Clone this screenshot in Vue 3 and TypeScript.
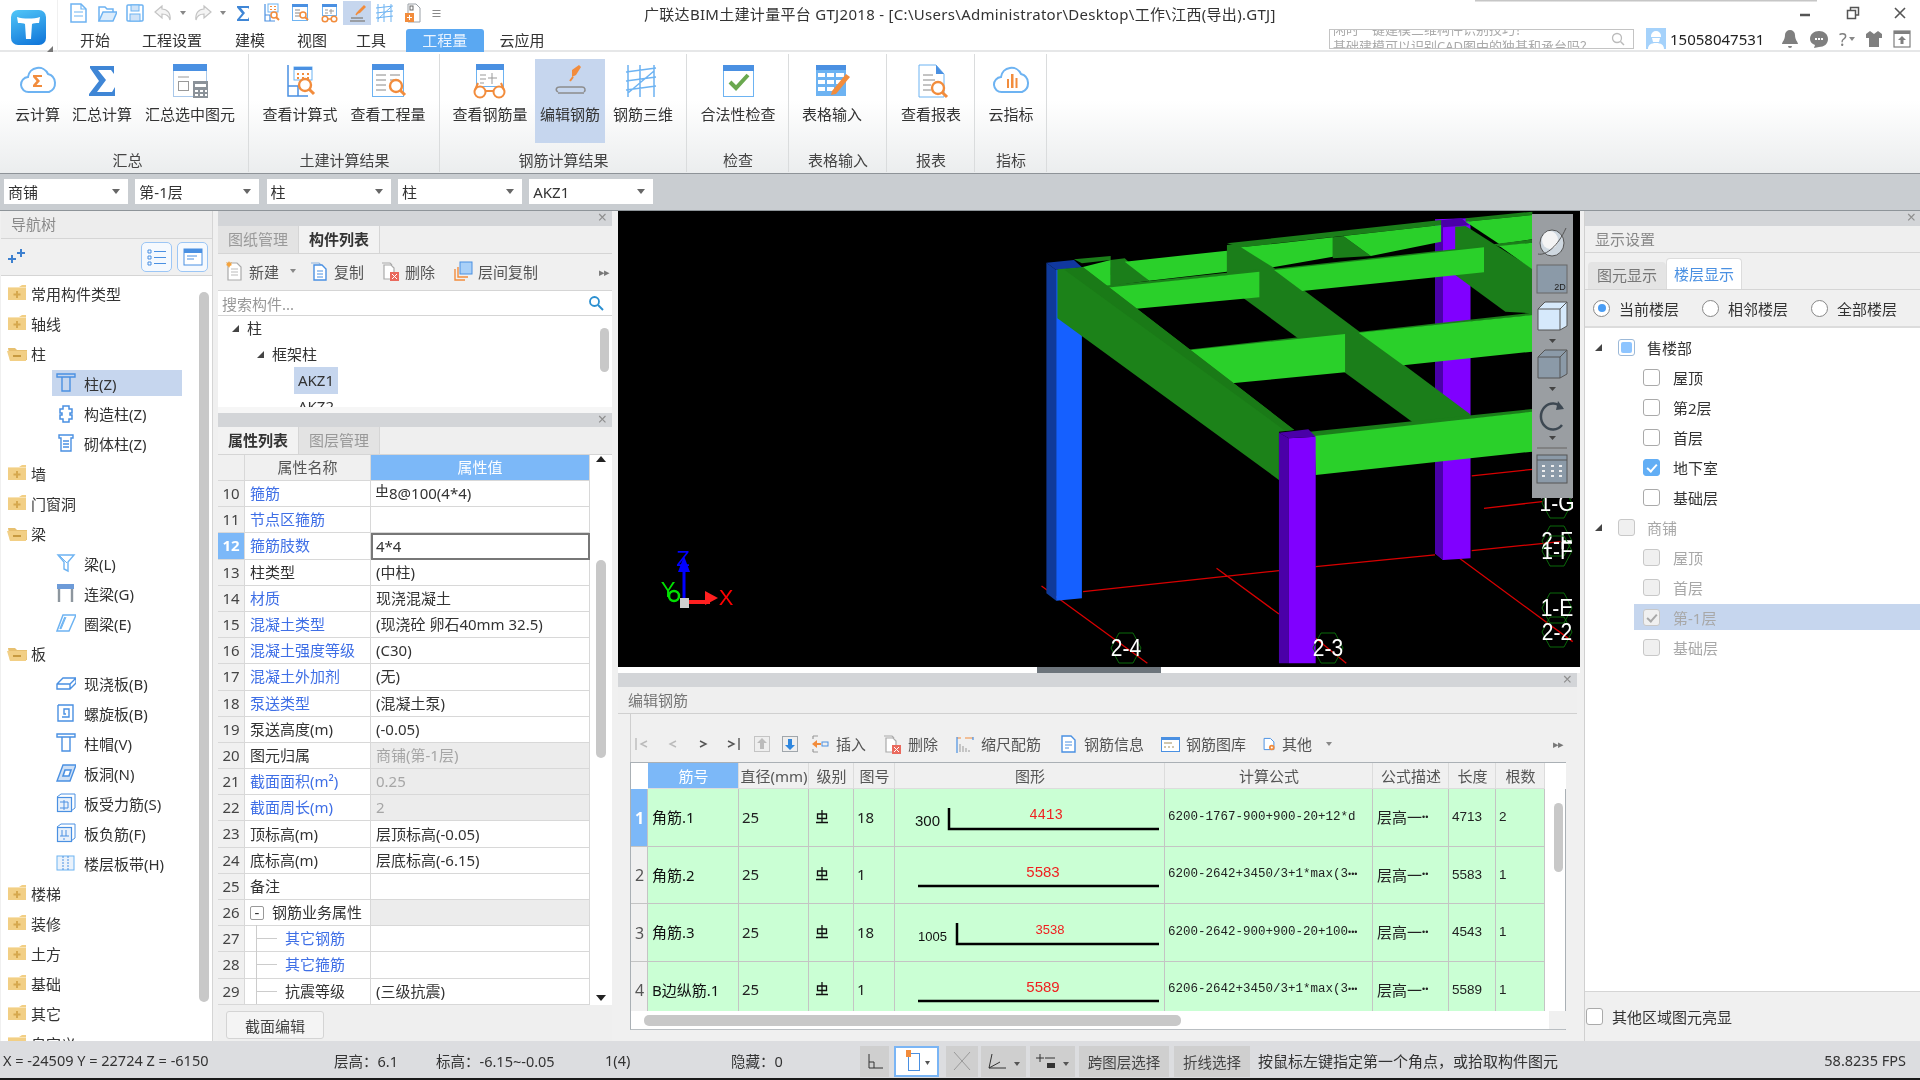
<script setup lang="ts">
const S = (c: string, w = 1.5) => `fill="none" stroke="${c}" stroke-width="${w}"`;
const blue = '#4a90e2', lb = '#6db3f2', org = '#f28c3c';
const mag = (x: number, y: number, r = 6) => `<circle cx="${x}" cy="${y}" r="${r}" fill="#fff" ${S(org, 2.4)}/><path d="M${x + r * 0.7} ${y + r * 0.7}l${r * 0.8} ${r * 0.8}" ${S(org, 3)}/>`;
const icons: Record<string, string> = {
  cloudSum: `<path d="M11 29a7.5 7.5 0 0 1-1-15 10.5 10.5 0 0 1 20-3 9.5 9.5 0 0 1 1 18z" ${S(lb, 2)}/><path d="M15 12h9v2h-5.5l3.5 4-3.500 4H24v2h-9v-2l3.500-4-3.500-4z" fill="${org}"/>`,
  sigma: `<path d="M8 3H32V11L29 7H16L24 17L15 29H30L33 24V33H7V31L17 18L8 5Z" fill="#3f86d6"/>`,
  sumSel: `<rect x="3.500" y="1.500" width="33" height="32" fill="#fff" stroke="#a9c8ea"/><rect x="3" y="1" width="34" height="7" fill="${blue}"/><path d="M8 14H19" stroke="#999"/><rect x="8.500" y="18.500" width="10" height="9" fill="none" stroke="#999"/><rect x="23" y="18" width="15" height="17" fill="#8b9299"/><path d="M25 21h11v3H25zM25 27h3v2h-3zM30 27h3v2h-3zM35 27h2v2h-2zM25 31h3v2h-3zM30 31h3v2h-3zM35 31h2v2h-2z" fill="#fff"/>`,
  viewCalc: `<path d="M8 2V33H28M8 23H18V33" ${S(blue, 1.5)}/><rect x="14" y="4" width="18" height="13" fill="#fff" stroke="${lb}"/><rect x="14" y="4" width="18" height="3" fill="${blue}"/><path d="M17 10h2v2h-2zM22 10h2v2h-2zM27 10h2v2h-2zM17 14h2v2h-2zM22 14h2v2h-2zM27 14h2v2h-2z" fill="${org}"/>${mag(25, 22)}`,
  viewQty: `<rect x="4.500" y="2.500" width="31" height="31" fill="#fff" stroke="${lb}"/><rect x="4" y="1" width="32" height="6" fill="${blue}"/><path d="M8 12H18M22 12H32M8 17H18M22 17H26M8 22H18M8 27H18" stroke="#888"/>${mag(28, 23)}`,
  viewSteel: `<rect x="6.500" y="1.500" width="27" height="22" fill="#fff" stroke="${lb}"/><rect x="6" y="1" width="28" height="6" fill="${blue}"/><path d="M10 12h6M10 16h6M10 20h4M22 10v11M18 15h9" stroke="#999"/><circle cx="10" cy="29" r="5.500" fill="#fff" ${S(org, 2)}/><circle cx="29" cy="29" r="5.500" fill="#fff" ${S(org, 2)}/><path d="M15 28h9M5 27l3-7M34 27l-3-7" ${S(org, 2)}/>`,
  editSteel: `<path d="M22 7l7-5 2 2-5 8-4 2z" fill="${org}"/><path d="M20 18l3-4" ${S(org, 2)}/><path d="M10 24h22M8 29c-3-2-2-5 2-5M32 24c3 0 4 3 2 5M8 30h26" ${S('#8c8c8c', 1.500)}/>`,
  steel3d: `<path d="M5 2V34M17 2V34M31 2V34M3 9L33 5M3 18L33 14M3 27L33 23M5 30L31 8" ${S(lb, 1.5)}/>`,
  check: `<rect x="5.500" y="2.500" width="30" height="31" fill="#fff" stroke="${lb}"/><rect x="5" y="2" width="31" height="6" fill="${blue}"/><path d="M12 19l6 6 12-13" ${S('#6aa84f', 4)}/>`,
  tableInput: `<rect x="4" y="2" width="30" height="31" fill="${lb}"/><rect x="4" y="2" width="30" height="5" fill="${blue}"/><path d="M6 10h7v4H6zM15 10h7v4h-7zM24 10h8v4h-8zM6 17h7v4H6zM15 17h7v4h-7zM24 17h8v4h-8zM6 24h7v4H6zM15 24h7v4h-7z" fill="#fff"/><path d="M20 28l14-17 4 3-14 17-5 1z" fill="${org}"/>`,
  report: `<path d="M8 2H25L33 11V34H8Z" fill="#fff" stroke="${lb}"/><path d="M25 2V11H33Z" fill="${blue}"/><path d="M12 12H22M12 17H24M12 22H20M12 27H20" stroke="#888"/>${mag(27, 25)}`,
  cloudIdx: `<path d="M11 29a7.500 7.500 0 0 1-1-15 10.500 10.500 0 0 1 20-3 9.500 9.500 0 0 1 1 18z" ${S(lb, 2)}/><path d="M16 16h2v9h-2zM20 11h2.500v14H20zM24.500 15h2v10h-2z" fill="${org}"/>`,

  qFile: `<path d="M3 1H13L18 6V19H3Z" fill="#fff" ${S(lb)}/><path d="M6 9H15M6 13H15M13 1V6H18" ${S(lb, 1.2)}/>`,
  qOpen: `<path d="M2 18V4H8L10 6H16V9" ${S(lb)}/><path d="M2 18L6 9H20L16 18Z" fill="#dcecfb" ${S(lb)}/>`,
  qSave: `<rect x="2" y="2" width="16" height="16" rx="1" fill="#fff" ${S(lb)}/><rect x="6" y="2" width="8" height="6" fill="#cfe3f8" stroke="${lb}"/><rect x="5" y="11" width="10" height="7" fill="#cfe3f8" stroke="${lb}"/>`,
  qUndo: `<path d="M9 3L2 9L9 15V11C13 11 16 13 17 17C18 10 14 6 9 6Z" fill="#f4f4f4" ${S('#c4c4c4', 1.2)}/>`,
  qRedo: `<path d="M11 3L18 9L11 15V11C7 11 4 13 3 17C2 10 6 6 11 6Z" fill="#f4f4f4" ${S('#c4c4c4', 1.2)}/>`,
  qSigma: `<path d="M4 3H16V6L15 5H8L12 10L7 16H15L16 14V18H4V16.500L9 10.500L4 4.500Z" fill="#3f86d6"/>`,
  qCalc: `<path d="M4 1V18H14M4 12H9V18" ${S(blue, 1.2)}/><rect x="7" y="1" width="10" height="8" fill="#fff" stroke="${lb}"/><path d="M9 3h2v1H9zM13 3h2v1h-2zM9 6h2v1H9zM13 6h2v1h-2z" fill="${org}"/><circle cx="13" cy="12" r="3" fill="#fff" ${S(org)}/><path d="M15 14l3 3" ${S(org, 2)}/>`,
  qQty: `<rect x="2.500" y="1.500" width="15" height="16" fill="#fff" stroke="${lb}"/><rect x="2" y="1" width="16" height="3" fill="${blue}"/><path d="M5 7h5M5 10h5M5 13h5" stroke="#888"/><circle cx="13" cy="12" r="3" fill="#fff" ${S(org)}/><path d="M15 14l3 3" ${S(org, 2)}/>`,
  qSteel: `<rect x="3.500" y="1.500" width="14" height="11" fill="#fff" stroke="${lb}"/><rect x="3" y="1" width="15" height="3" fill="${blue}"/><path d="M6 7h3M6 10h3M12 6v5M10 8h5" stroke="#999"/><circle cx="6" cy="16" r="2.800" fill="#fff" ${S(org)}/><circle cx="15" cy="16" r="2.800" fill="#fff" ${S(org)}/><path d="M9 16h3" ${S(org)}/>`,
  qEdit: `<path d="M11 8l6-6 2 2-6 6-3 1z" fill="${org}"/><path d="M9 12l2-3" ${S(org)}/><path d="M4 15H16M3 18H18" ${S('#8c8c8c')}/>`,
  q3d: `<path d="M3 1V19M9 1V19M16 1V19M1 5L18 3M1 10L18 8M1 15L18 13M3 16L16 4" ${S(lb, 1)}/>`,
  qPage: `<path d="M5 1H13L17 5V19H5Z" fill="#fff" ${S('#9aa0a6', 1)}/><rect x="2" y="10" width="9" height="9" fill="${org}"/><path d="M6.500 12v5M4 14.500h5" stroke="#fff"/><rect x="7" y="3" width="3" height="4" fill="none" stroke="#666"/>`,

  fClosed: `<path d="M1 4H12L15 2H19V17H1Z" fill="#f2cf85"/><path d="M1 4H19V5H1Z" fill="#f8e3b5"/><path d="M9 8h2v2.500h2.500v2H11V15H9v-2.500H6.500v-2H9z" fill="#d6a84e"/>`,
  fOpen: `<path d="M1 5H8L10 7H20V17H3Z" fill="#e7c070"/><path d="M0 8H20L19 18H3Z" fill="#f2cf85"/><path d="M6 12h8v2H6z" fill="#c89a40"/>`,
  col: `<path d="M1 1H19V4H1ZM6 4V18H14V4" ${S(blue, 1.4)}/>`,
  gz: `<path d="M7 3H13V6H16V10H14V12H16V16H13V19H7V16H4V12H6V10H4V6H7Z" ${S(blue, 1.5)}/>`,
  qt: `<path d="M3 2H17V5H15V18H5V5H3ZM7 8H13M7 11H13M7 14H13" ${S(blue, 1.4)}/>`,
  beam: `<path d="M2 2H18L12 9V18L8 16V9Z" ${S(lb, 1.4)}/><path d="M4 3L11 10" ${S(lb, 1)}/>`,
  lian: `<rect x="1" y="1" width="17" height="5" fill="#6d9bd8"/><path d="M3 6V19M16 6V19" ${S('#8d969e', 2.4)}/>`,
  ring: `<path d="M7 2H20L13 18H1Z M9 4L4 16" ${S(lb, 1.5)}/><path d="M10 4L5 16" ${S(lb, 1)}/>`,
  slab: `<path d="M1 11L7 5H20V10L14 16H1ZM1 11H14L20 5M14 11V16" ${S(blue, 1.4)}/>`,
  spiral: `<path d="M2 2H17V18H2V2M6 14H13V6H8V11H10" ${S(blue, 1.4)}/>`,
  hole: `<path d="M7 2H20L14 18H1Z" fill="#cfe0f5" ${S(blue, 1.4)}/><path d="M9 7H15L13 13H7Z" fill="#fff" ${S(blue, 1.6)}/>`,
  sRebar: `<rect x="1.500" y="4.500" width="14" height="14" fill="#e8f1fb" ${S(blue, 1.2)}/><path d="M1 4L5 1H19V15L15 18M4 9H12V15H4M8 7V17" ${S(blue, 1)}/>`,
  fRebar: `<rect x="1.500" y="4.500" width="14" height="14" fill="#e8f1fb" ${S(blue, 1.2)}/><path d="M1 4L5 1H19V15L15 18M6 7V13M10 7V13M4 13H13M8 15V17" ${S(blue, 1)}/>`,
  band: `<rect x="1" y="3" width="17" height="14" fill="#eaf2fb" stroke="${lb}"/><path d="M7 3V17M12 3V17" ${S(blue, 1)} stroke-dasharray="2 1"/>`,

  tNew: `<path d="M4 2H13L17 6V19H4Z" fill="#fff" ${S('#aaa', 1.2)}/><path d="M2 1l2 1 1-2 1 2 2-1-1 2 1 1-2 1-1 2-1-2-2-1 1-1z" fill="#f5a33c"/><path d="M7 8h7M7 11h7M7 14h7" stroke="#bbb"/>`,
  tCopy: `<path d="M2 2H10L13 5" ${S('#8fb3dd', 1.2)}/><path d="M5 4H13L17 8V19H5Z" fill="#fff" ${S(blue, 1.4)}/><path d="M8 10h6M8 13h6M8 16h6" ${S(blue, 1)}/>`,
  tDel: `<path d="M2 2H10L12 4" ${S('#aaa', 1.200)}/><path d="M4 4H11L14 7V18H4Z" fill="#fff" ${S('#aaa', 1.200)}/><rect x="10" y="11" width="9" height="9" fill="#ea6a5e"/><path d="M12 13l5 5M17 13l-5 5" stroke="#fff"/>`,
  tLayer: `<path d="M2 8V19H12M5 6V16H15" ${S(org, 1.400)}/><rect x="7" y="1" width="12" height="12" fill="#a9d0f8" stroke="${blue}"/>`,

  eFirst: `<path d="M3 4V16" stroke="#bbb" stroke-width="1.400"/><path d="M14 7L8 10L14 13" ${S('#bbb', 1.400)}/>`,
  ePrev: `<path d="M13 7L7 10L13 13" ${S('#bbb', 1.400)}/>`,
  eNext: `<path d="M7 7L13 10L7 13" ${S('#555', 1.400)}/>`,
  eLast: `<path d="M6 7L12 10L6 13" ${S('#555', 1.400)}/><path d="M17 4V16" stroke="#555" stroke-width="1.400"/>`,
  eUp: `<rect x="2.500" y="2.500" width="15" height="15" fill="#eee" stroke="#c4c4c4"/><path d="M10 4L15 9H12V15H8V9H5Z" fill="#bbb"/>`,
  eDown: `<rect x="2.500" y="2.500" width="15" height="15" fill="#eee" stroke="#a0a6ab"/><path d="M10 16L15 11H12V5H8V11H5Z" fill="#2e86de"/>`,
  eIns: `<path d="M3 2H8M3 18H8M3 2V5M3 15V18" ${S('#999', 1.200)}/><path d="M2 10L7 6V14Z" fill="${org}"/><path d="M6 10H11" ${S(org, 2)}/><rect x="12" y="8" width="6" height="4" fill="none" stroke="${blue}"/>`,
  eScale: `<path d="M2 4H6M10 4H18" ${S(org, 1.200)}/><path d="M2 3V19M18 3V6" ${S(blue, 1.200)}/><path d="M5 10V18M8 12V18M11 14V18M14 16V18" stroke="#999"/>`,
  eInfo: `<path d="M4 2H13L17 6V18H4Z" fill="#fff" ${S(blue, 1.400)}/><path d="M7 8h7M7 11h7M7 14h4" ${S(blue, 1)}/>`,
  eLib: `<rect x="1.500" y="3.500" width="18" height="14" fill="#fff" stroke="${blue}"/><rect x="1" y="3" width="19" height="3" fill="${blue}"/><path d="M4 9h8M4 13h2M8 13h2M12 13h2" stroke="#a58f5a"/>`,
  eOther: `<path d="M3 2H12L17 7V18H3Z" fill="#fff" ${S(blue, 1.400)}/><circle cx="14" cy="15" r="4" fill="${org}"/><circle cx="14" cy="15" r="1.500" fill="#fff"/>`,
};

const qat = [
  { i: 'qFile', w: 29 }, { i: 'qOpen', w: 29 }, { i: 'qSave', w: 28 }, { i: 'qUndo', w: 28 }, { a: 1, w: 12 }, { i: 'qRedo', w: 28 }, { a: 1, w: 12 },
  { i: 'qSigma', w: 27 }, { i: 'qCalc', w: 29 }, { i: 'qQty', w: 29 }, { i: 'qSteel', w: 29 }, { i: 'qEdit', w: 28, s: 1 }, { i: 'q3d', w: 28 }, { i: 'qPage', w: 28 },
];
const tabs = [
  { t: '开始', w: 74 }, { t: '工程设置', w: 80 }, { t: '建模', w: 76 }, { t: '视图', w: 48 }, { t: '工具', w: 70 }, { t: '工程量', w: 77.5, on: 1 }, { t: '云应用', w: 77 },
];
const ribbon = [
  { w: 249, pad: 7.5, name: '汇总', items: [{ t: '云计算', i: 'cloudSum', w: 60 }, { t: '汇总计算', i: 'sigma', w: 69 }, { t: '汇总选中图元', i: 'sumSel', w: 107 }] },
  { w: 191, pad: 7, name: '土建计算结果', items: [{ t: '查看计算式', i: 'viewCalc', w: 88 }, { t: '查看工程量', i: 'viewQty', w: 88 }] },
  { w: 247, pad: 5, name: '钢筋计算结果', items: [{ t: '查看钢筋量', i: 'viewSteel', w: 90 }, { t: '编辑钢筋', i: 'editSteel', w: 70, on: 1 }, { t: '钢筋三维', i: 'steel3d', w: 76 }] },
  { w: 102, pad: 6, name: '检查', items: [{ t: '合法性检查', i: 'check', w: 90 }] },
  { w: 98, pad: 0, name: '表格输入', items: [{ t: '表格输入', i: 'tableInput', w: 86 }] },
  { w: 88, pad: 4, name: '报表', items: [{ t: '查看报表', i: 'report', w: 80 }] },
  { w: 72, pad: 1, name: '指标', items: [{ t: '云指标', i: 'cloudIdx', w: 70 }] },
];
const combos = ['商铺', '第-1层', '柱', '柱', 'AKZ1'];
const nav = [
  { t: '常用构件类型', k: 'fClosed' }, { t: '轴线', k: 'fClosed' }, { t: '柱', k: 'fOpen' },
  { t: '柱(Z)', i: 'col', on: 1 }, { t: '构造柱(Z)', i: 'gz' }, { t: '砌体柱(Z)', i: 'qt' },
  { t: '墙', k: 'fClosed' }, { t: '门窗洞', k: 'fClosed' }, { t: '梁', k: 'fOpen' },
  { t: '梁(L)', i: 'beam' }, { t: '连梁(G)', i: 'lian' }, { t: '圈梁(E)', i: 'ring' },
  { t: '板', k: 'fOpen' },
  { t: '现浇板(B)', i: 'slab' }, { t: '螺旋板(B)', i: 'spiral' }, { t: '柱帽(V)', i: 'col' }, { t: '板洞(N)', i: 'hole' }, { t: '板受力筋(S)', i: 'sRebar' }, { t: '板负筋(F)', i: 'fRebar' }, { t: '楼层板带(H)', i: 'band' },
  { t: '楼梯', k: 'fClosed' }, { t: '装修', k: 'fClosed' }, { t: '土方', k: 'fClosed' }, { t: '基础', k: 'fClosed' }, { t: '其它', k: 'fClosed' }, { t: '自定义', k: 'fClosed' },
];
const props = [
  { n: 10, a: '箍筋', v: '8@100(4*4)', link: 1, gr: 1 },
  { n: 11, a: '节点区箍筋', v: '', link: 1 },
  { n: 12, a: '箍筋肢数', v: '4*4', link: 1, edit: 1 },
  { n: 13, a: '柱类型', v: '(中柱)' },
  { n: 14, a: '材质', v: '现浇混凝土', link: 1 },
  { n: 15, a: '混凝土类型', v: '(现浇砼 卵石40mm 32.5)', link: 1 },
  { n: 16, a: '混凝土强度等级', v: '(C30)', link: 1 },
  { n: 17, a: '混凝土外加剂', v: '(无)', link: 1 },
  { n: 18, a: '泵送类型', v: '(混凝土泵)', link: 1 },
  { n: 19, a: '泵送高度(m)', v: '(-0.05)' },
  { n: 20, a: '图元归属', v: '商铺(第-1层)', off: 1 },
  { n: 21, a: '截面面积(m²)', v: '0.25', off: 1, link: 1 },
  { n: 22, a: '截面周长(m)', v: '2', off: 1, link: 1 },
  { n: 23, a: '顶标高(m)', v: '层顶标高(-0.05)' },
  { n: 24, a: '底标高(m)', v: '层底标高(-6.15)' },
  { n: 25, a: '备注', v: '' },
  { n: 26, a: '钢筋业务属性', v: '', group: 1, off: 1 },
  { n: 27, a: '其它钢筋', v: '', sub: 1, link: 1 },
  { n: 28, a: '其它箍筋', v: '', sub: 1, link: 1 },
  { n: 29, a: '抗震等级', v: '(三级抗震)', sub: 1 },
];
const editTools = [
  { i: 'eFirst', w: 30 }, { i: 'ePrev', w: 30 }, { i: 'eNext', w: 29 }, { i: 'eLast', w: 30 }, { i: 'eUp', w: 28 }, { i: 'eDown', w: 30 },
  { i: 'eIns', t: '插入', w: 72 }, { i: 'eDel', t: '删除', w: 73 }, { i: 'eScale', t: '缩尺配筋', w: 103 }, { i: 'eInfo', t: '钢筋信息', w: 102 }, { i: 'eLib', t: '钢筋图库', w: 102 }, { i: 'eOther', t: '其他', w: 70, menu: 1 },
];
icons.eDel = icons.tDel;
const rebarHeads = ['', '筋号', '直径(mm)', '级别', '图号', '图形', '计算公式', '公式描述', '长度', '根数', ''];
const rebars = [
  { n: 1, name: '角筋.1', d: 25, fig: 18, f: '6200-1767-900+900-20+12*d', cut: 0, len: 4713, c: 2, left: '300', vx: 54, lx: 54, label: '4413', tx: 151, lf: 'Liberation Mono', ls: 14 },
  { n: 2, name: '角筋.2', d: 25, fig: 1, f: '6200-2642+3450/3+1*max(3', cut: 1, len: 5583, c: 1, left: '', vx: 0, lx: 23, label: '5583', tx: 148, lf: 'Liberation Sans', ls: 15 },
  { n: 3, name: '角筋.3', d: 25, fig: 18, f: '6200-2642-900+900-20+100', cut: 1, len: 4543, c: 1, left: '1005', vx: 62, lx: 62, label: '3538', tx: 155, lf: 'Liberation Sans', ls: 13 },
  { n: 4, name: 'B边纵筋.1', d: 25, fig: 1, f: '6206-2642+3450/3+1*max(3', cut: 1, len: 5589, c: 1, left: '', vx: 0, lx: 23, label: '5589', tx: 148, lf: 'Liberation Sans', ls: 15 },
];
const floors = [
  { t: '售楼部', p: 1, st: 'part' }, { t: '屋顶' }, { t: '第2层' }, { t: '首层' }, { t: '地下室', st: 'on' }, { t: '基础层' },
  { t: '商铺', p: 1, off: 1 }, { t: '屋顶', off: 1 }, { t: '首层', off: 1 }, { t: '第-1层', off: 1, st: 'grey', sel: 1 }, { t: '基础层', off: 1 },
];
const radios = [{ t: '当前楼层', on: 1 }, { t: '相邻楼层' }, { t: '全部楼层' }];
const labels3d = [
  { t: '1-G', x: 939, y: 292 }, { t: '2-F', x: 939, y: 330 }, { t: '1-F', x: 939, y: 340 }, { t: '1-E', x: 939, y: 397 }, { t: '2-2', x: 939, y: 421 }, { t: '2-4', x: 508, y: 437 }, { t: '2-3', x: 710, y: 437 },
];
const stats = [
  { t: 'X = -24509 Y = 22724 Z = -6150', w: 331 }, { t: '层高：6.1', w: 102 }, { t: '标高：-6.15~-0.05', w: 169 }, { t: '1(4)', w: 126 }, { t: '隐藏：0', w: 129 },
];
</script>

<template>
  <div class="app">
    <header class="top">
      <div class="logo-col">
        <div class="logo"><svg width="35" height="35" viewBox="0 0 35 35"><path d="M6 7C12 9 23 9 29 7L28 13C25 13 22 13 21 14L20 29H15L14 14C13 13 10 13 7 13Z" fill="#fff"/></svg></div>
        <i class="logo-mark"></i>
      </div>
      <div class="top-main">
        <div class="title-row">
          <div class="qat">
            <span v-for="(q, k) in qat" :key="k" class="qbtn" :class="{ on: q.s }" :style="{ width: q.w + 'px' }">
              <svg v-if="q.i" width="20" height="20" viewBox="0 0 20 20" v-html="icons[q.i]"></svg>
              <i v-else class="tri small"></i>
            </span>
            <span class="qmore">≡</span>
          </div>
          <div class="win-title">广联达BIM土建计量平台 GTJ2018 - [C:\Users\Administrator\Desktop\工作\江西(导出).GTJ]</div>
          <div class="win-ctl">
            <svg width="14" height="14" viewBox="0 0 14 14"><path d="M1 9H11" stroke="#555" stroke-width="2.500"/></svg>
            <svg width="14" height="14" viewBox="0 0 14 14"><path d="M1.500 4.500H9.500V12.500H1.500ZM4.500 4V1.500H12.500V9H10" fill="none" stroke="#555" stroke-width="1.500"/></svg>
            <svg width="14" height="14" viewBox="0 0 14 14"><path d="M2 2L12 12M12 2L2 12" stroke="#555" stroke-width="1.600"/></svg>
          </div>
        </div>
        <div class="tab-row">
          <span v-for="t in tabs" :key="t.t" class="rtab" :class="{ on: t.on }" :style="{ width: t.w + 'px' }">{{ t.t }}</span>
          <div class="search-box">
            <div class="search-txt"><div>闲时一键建模三维构件识别技巧？</div><div>基础建模可以识别CAD图中的独基和承台吗？</div></div>
            <svg class="s-ico" width="14" height="14" viewBox="0 0 14 14"><circle cx="6" cy="6" r="4.500" fill="none" stroke="#bbb" stroke-width="1.300"/><path d="M9.500 9.500L13 13" stroke="#bbb" stroke-width="1.500"/></svg>
          </div>
          <svg class="avatar" width="20" height="21" viewBox="0 0 20 21"><rect width="20" height="21" fill="#a5d2fb"/><path d="M5 8a5 5 0 0 1 10 0v1H5zM6 10h8l-1 4H7zM2 21c0-4 3-6 8-6s8 2 8 6z" fill="#fff"/></svg>
          <span class="phone">15058047531</span>
          <div class="user-icons">
            <svg width="18" height="20" viewBox="0 0 18 20"><path d="M9 1a5 5 0 0 1 5 5c0 5 3 7 3 9H1c0-2 3-4 3-9a5 5 0 0 1 5-5zM7 17h4a2 2 0 0 1-4 0z" fill="#7f7f7f"/></svg>
            <svg width="20" height="20" viewBox="0 0 20 20"><path d="M10 2c5 0 9 3 9 8s-4 8-9 8l-5 1 1-3c-3-1-5-3-5-6 0-5 4-8 9-8z" fill="#7f7f7f"/><path d="M6 9h2v2H6zM9 9h2v2H9zM12 9h2v2h-2z" fill="#fff"/></svg>
            <span class="help">?<i class="tri small"></i></span>
            <svg width="18" height="20" viewBox="0 0 18 20"><path d="M5 2L1 5V9H4V18H14V9H17V5L13 2L9 5Z" fill="#7f7f7f"/></svg>
            <svg width="18" height="18" viewBox="0 0 18 18"><rect x="1" y="1" width="16" height="16" fill="none" stroke="#7f7f7f" stroke-width="1.200"/><rect x="1" y="1" width="16" height="3" fill="#7f7f7f"/><path d="M9 6L13 10H10.500V14H7.500V10H5Z" fill="#7f7f7f"/></svg>
          </div>
        </div>
      </div>
      <div class="top-shadow"></div>
    </header>

    <section class="ribbon">
      <div v-for="g in ribbon" :key="g.name" class="rgroup" :style="{ width: g.w + 'px' }">
        <div class="ritems" :style="{ paddingLeft: g.pad + 'px' }">
          <div v-for="it in g.items" :key="it.t" class="ritem" :class="{ on: it.on }" :style="{ width: it.w + 'px' }">
            <svg width="40" height="36" viewBox="0 0 40 36" v-html="icons[it.i]"></svg>
            <span>{{ it.t }}</span>
          </div>
        </div>
        <div class="rname">{{ g.name }}</div>
      </div>
    </section>

    <section class="combos">
      <div v-for="(c, k) in combos" :key="k" class="combo"><span>{{ c }}</span><i class="tri"></i></div>
    </section>

    <main class="main">
      <aside class="nav">
        <div class="nav-title">导航树</div>
        <div class="nav-tools">
          <svg class="plus" width="20" height="16" viewBox="0 0 20 16"><path d="M3 8h2v3h3v2H5v3H3v-3H0v-2h3zM12 2h2v3h3v2h-3v3h-2V7H9V5h3z" fill="#3d80cf"/></svg>
          <span class="tool-btn"><svg width="20" height="18" viewBox="0 0 20 18"><path d="M1 2h3v3H1zM1 8h3v3H1zM1 14h3v3H1zM7 3.500H19M7 9.500H19M7 15.500H19" fill="none" stroke="#4a90e2"/></svg></span>
          <span class="tool-btn"><svg width="20" height="18" viewBox="0 0 20 18"><rect x="1" y="1" width="18" height="16" fill="#fff" stroke="#4a90e2"/><rect x="1" y="1" width="18" height="4" fill="#4a90e2"/><path d="M4 8h10M4 11h7" stroke="#4a90e2"/></svg></span>
        </div>
        <div class="nav-list">
          <div v-for="(r, k) in nav" :key="k" class="nav-row" :class="{ child: r.i, on: r.on }">
            <svg width="20" height="20" viewBox="0 0 20 20" v-html="icons[(r.k || r.i) as string]"></svg>
            <span>{{ r.t }}</span>
          </div>
          <i class="thumb nav-thumb"></i>
        </div>
      </aside>

      <div class="mid">
        <div class="strip"><span class="x">×</span></div>
        <div class="ptabs"><span class="ptab off">图纸管理</span><span class="ptab cur">构件列表</span></div>
        <div class="mtool">
          <span class="mt m1"><svg width="20" height="20" viewBox="0 0 20 20" v-html="icons.tNew"></svg>新建<i class="tri small"></i></span>
          <span class="mt m2"><svg width="20" height="20" viewBox="0 0 20 20" v-html="icons.tCopy"></svg>复制</span>
          <span class="mt m3"><svg width="20" height="20" viewBox="0 0 20 20" v-html="icons.tDel"></svg>删除</span>
          <span class="mt m4"><svg width="20" height="20" viewBox="0 0 20 20" v-html="icons.tLayer"></svg>层间复制</span>
          <span class="more">▸▸</span>
        </div>
        <div class="msearch"><span>搜索构件...</span><svg width="16" height="16" viewBox="0 0 16 16"><circle cx="6.500" cy="6.500" r="4.500" fill="none" stroke="#2b8fd0" stroke-width="1.800"/><path d="M10 10L15 15" stroke="#2b8fd0" stroke-width="2"/></svg></div>
        <div class="mtree">
          <div class="tr l1"><i class="corner"></i>柱</div>
          <div class="tr l2"><i class="corner"></i>框架柱</div>
          <div class="tr l3"><b class="sel">AKZ1</b></div>
          <div class="tr l3"><b>AKZ2</b></div>
          <i class="thumb tree-thumb"></i>
        </div>
        <div class="msplit"></div>
        <div class="strip thin"><span class="x">×</span></div>
        <div class="ptabs"><span class="ptab cur">属性列表</span><span class="ptab off">图层管理</span></div>
        <div class="ptable">
          <div class="phead"><span class="pc0"></span><span class="pc1">属性名称</span><span class="pc2">属性值</span></div>
          <div v-for="p in props" :key="p.n" class="prow">
            <span class="pc0" :class="{ cur: p.edit }">{{ p.n }}</span>
            <span class="pc1" :class="{ link: p.link, sub: p.sub }">
              <template v-if="p.group"><i class="minus">-</i></template>
              <i v-if="p.sub" class="guide"></i>
              {{ p.a }}
            </span>
            <span class="pc2" :class="{ off: p.off, editing: p.edit }">
              <svg v-if="p.gr" class="gr gr-top" width="12" height="14" viewBox="0 0 12 14"><path d="M6 0V13M0 12.500H12M1.500 4H10.500V8.500H1.500Z" fill="none" stroke="#333" stroke-width="1.200"/></svg>{{ p.v }}
            </span>
          </div>
          <div class="pscroll">
            <i class="arrow up"></i><i class="thumb prop-thumb"></i><i class="arrow down"></i>
          </div>
        </div>
        <div class="pfoot"><button class="sec-btn">截面编辑</button></div>
      </div>

      <div class="center">
        <div class="canvas">
          <svg class="scene" width="962" height="456" viewBox="0 0 962 456">
            <g transform="scale(0.612 0.3333) translate(0 -3)">
              <g stroke="#d80000" fill="none">
                <path vector-effect="non-scaling-stroke" stroke-width="1.300" d="M760 1145L1080 1082M1140 1070L1335 1035M1395 1022L1540 995M1395 798L1494 778M1415 895L1510 875M692 1128L865 1360M978 1075L1080 1212M1140 1285L1190 1360M1375 1045L1560 1295"/>
              </g>
              <polygon points="1335,28 1390,25 1393,50 1393,1045 1348,1050 1335,1030" fill="#8000ff"/>
              <polygon points="1335,30 1348,50 1348,1050 1335,1030" fill="#4a00a8"/>
              <polygon points="1335,32 1378,25 1392,46 1348,52" fill="#4a00a8"/>
              <polygon points="700,158 716,180 716,1172 700,1150" fill="#0f3a9a"/>
              <polygon points="716,180 758,172 758,1165 716,1172" fill="#1560ff"/>
              <polygon points="700,158 745,150 758,172 716,180" fill="#10389f"/>

              <polygon points="805,150 828,145 868,212 805,228" fill="#1b7e1a"/>
              <polygon points="1168,82 1185,78 1230,138 1168,145" fill="#1b7e1a"/>
              <polygon points="1368,50 1385,48 1494,175 1494,310 1450,305 1368,195" fill="#1b7e1a"/>
              <polygon points="995,105 1018,100 1392,612 1392,622 1298,636 1020,262 995,190" fill="#1b7e1a"/>

              <polygon points="745,148 805,138 805,150 758,160" fill="#1b7e1a"/>
              <polygon points="995,100 1345,30 1345,45 1018,112" fill="#1b7e1a"/>
              <polygon points="1385,25 1494,5 1494,15 1385,35" fill="#1b7e1a"/>
              <polygon points="758,172 805,150 805,228 780,232 758,195" fill="#2ad02a"/>
              <polygon points="828,155 995,122 995,185 868,212" fill="#2ad02a"/>
              <polygon points="1018,112 1168,82 1168,140 1070,172" fill="#2ad02a"/>
              <polygon points="1185,78 1345,45 1345,95 1230,138" fill="#2ad02a"/>
              <polygon points="1385,35 1494,15 1494,88 1440,102" fill="#2ad02a"/>

              <polygon points="780,230 1048,178 1048,186 790,237" fill="#1b7e1a"/>
              <polygon points="1072,176 1415,108 1415,114 1072,182" fill="#1b7e1a"/>
              <polygon points="1430,103 1494,88 1494,98 1440,110" fill="#1b7e1a"/>
              <polygon points="790,235 1048,185 1048,262 838,298" fill="#2ad02a"/>
              <polygon points="1072,180 1415,112 1415,187 1118,243" fill="#2ad02a"/>
              <polygon points="1440,108 1494,98 1494,178" fill="#2ad02a"/>

              <polygon points="912,423 1188,366 1188,375 925,425" fill="#1b7e1a"/>
              <polygon points="1210,366 1494,308 1494,316 1210,370" fill="#1b7e1a"/>
              <polygon points="925,422 1188,372 1188,487 1003,520" fill="#2ad02a"/>
              <polygon points="1210,368 1494,315 1494,425 1283,466" fill="#2ad02a"/>

              <polygon points="718,178 760,172 1105,660 1080,665 1080,810 718,325" fill="#1c8219"/>
              <polygon points="730,180 760,172 1105,660 1090,662" fill="#1a7a17"/>

              <polygon points="1130,665 1494,597 1494,607 1138,680" fill="#1b7e1a"/>
              <polygon points="1138,678 1494,605 1494,725 1140,795" fill="#2ad02a"/>

              <polygon points="1080,668 1096,685 1096,1360 1080,1360" fill="#4a00a8"/>
              <polygon points="1096,685 1140,680 1140,1360 1096,1360" fill="#8000ff"/>
              <polygon points="1080,668 1128,658 1140,680 1096,685" fill="#4a00a8"/>
            </g>
            <g class="axis">
              <path d="M66 391V358" stroke="#0000ff" stroke-width="3"/>
              <path d="M66 345L60 361H72Z" fill="#0000ff"/>
              <path d="M66 391H92" stroke="#ff2020" stroke-width="4"/>
              <path d="M100 387L87 380V394Z" fill="#ff2020"/>
              <circle cx="56" cy="385" r="5" fill="none" stroke="#00e000" stroke-width="2.500"/>
              <rect x="62" y="387" width="9" height="10" fill="#cfcfcf"/>
              <text x="65" y="355" class="ax" fill="#0000ff" text-anchor="middle">Z</text>
              <text x="108" y="394" class="ax" fill="#ff0000" text-anchor="middle">X</text>
              <text x="50" y="386" class="ax" fill="#00e000" text-anchor="middle">Y</text>
            </g>
            <g v-for="l in labels3d" :key="l.t">
              <polygon :points="`${l.x - 7},${l.y - 15} ${l.x + 7},${l.y - 15} ${l.x + 15},${l.y} ${l.x + 7},${l.y + 15} ${l.x - 7},${l.y + 15} ${l.x - 15},${l.y}`" fill="none" stroke="#0a6a0a"/>
              <text :transform="`translate(${l.x} ${l.y + 8}) scale(1.05 1.2)`" class="lbl" text-anchor="middle">{{ l.t }}</text>
            </g>
          </svg>
          <div class="view-bar">
            <svg width="41" height="284" viewBox="0 0 41 284">
              <ellipse cx="20" cy="29" rx="12" ry="13" fill="#cfd8e0" stroke="#555"/><ellipse cx="18" cy="26" rx="8" ry="9" fill="#f4f4f4"/><path d="M6 40c8 2 20-8 28-26" fill="none" stroke="#555"/>
              <rect x="5" y="51" width="30" height="28" fill="#8b9aa8" stroke="#666"/><text x="28" y="76" class="vt">2D</text>
              <path d="M6 95L13 88H35V112L28 116H6ZM6 95H28V116M28 95L35 88" fill="#d6e9fb" stroke="#555"/>
              <path d="M17 125h7l-3.500 4z" fill="#444"/>
              <path d="M6 143L13 136H35V160L28 164H6ZM6 143H28V164M28 143L35 136" fill="#8b9aa8" stroke="#555"/>
              <path d="M17 173h7l-3.500 4z" fill="#444"/>
              <path d="M30 194a12 13 0 1 0 0 17" fill="none" stroke="#3d4852" stroke-width="2.500"/><path d="M26 187l6 8-8 1z" fill="#3d4852"/>
              <path d="M17 222h7l-3.500 4z" fill="#444"/>
              <path d="M5 234H35" stroke="#777" stroke-width="1.500"/>
              <rect x="5" y="241" width="30" height="28" fill="#8b9aa8" stroke="#555"/><path d="M5 246H35" stroke="#555"/><path d="M10 252h3M10 257h3M10 262h3M19 252h3M19 257h3M19 262h3M27 252h3M27 257h3M27 262h3" stroke="#eee" stroke-width="2"/>
            </svg>
          </div>
        </div>
        <div class="csplit"><i></i></div>
        <section class="edit">
          <div class="strip thin"><span class="x">×</span></div>
          <div class="edit-title">编辑钢筋</div>
          <div class="etool">
            <span v-for="e in editTools" :key="e.i" class="et" :style="{ width: e.w + 'px' }">
              <svg width="20" height="20" viewBox="0 0 20 20" v-html="icons[e.i]"></svg><template v-if="e.t">{{ e.t }}</template><i v-if="e.menu" class="tri small"></i>
            </span>
            <span class="more">▸▸</span>
          </div>
          <div class="rtable">
            <div class="rhead">
              <span v-for="(h, k) in rebarHeads" :key="k" :class="{ hi: k === 1, blank: k === 0 || k === 10 }">{{ h }}</span>
            </div>
            <div class="rbody">
              <div v-for="r in rebars" :key="r.n" class="rrow">
                <span class="ridx" :class="{ cur: r.n === 1 }">{{ r.n }}</span>
                <span class="rname-c">{{ r.name }}</span>
                <span>{{ r.d }}</span>
                <span><svg class="gr grade" width="12" height="14" viewBox="0 0 12 14"><path d="M6 0V13M0 12.500H12M1.500 4H10.500V8.500H1.500Z" fill="none" stroke="#111" stroke-width="1.300"/></svg></span>
                <span>{{ r.fig }}</span>
                <span class="fig">
                  <svg width="270" height="57" viewBox="0 0 270 57">
                    <text v-if="r.left" :x="r.left.length > 3 ? 23 : 20" y="37" class="figl" :class="{ n4: r.left.length > 3 }">{{ r.left }}</text>
                    <path :d="r.vx ? `M${r.vx} 19V40H264` : 'M23 39H264'" fill="none" stroke="#000" stroke-width="2.500"/>
                    <text :x="r.tx" y="30" class="figr" text-anchor="middle" :style="{ fontFamily: r.lf, fontSize: r.ls + 'px' }">{{ r.label }}</text>
                  </svg>
                </span>
                <span class="mono">{{ r.f }}<em v-if="r.cut" class="dots">•••</em></span>
                <span class="desc">层高一<em class="dots">••</em></span>
                <span class="num">{{ r.len }}</span>
                <span class="num">{{ r.c }}</span>
                <span class="rblank"></span>
              </div>
              <i class="thumb r-thumb"></i>
            </div>
            <div class="hscroll"><i></i></div>
          </div>
        </section>
      </div>

      <aside class="right">
        <div class="strip"><span class="x">×</span></div>
        <div class="right-title">显示设置</div>
        <div class="rtabs"><span class="rt">图元显示</span><span class="rt cur">楼层显示</span></div>
        <div class="radios">
          <label v-for="r in radios" :key="r.t"><i class="radio" :class="{ on: r.on }"></i>{{ r.t }}</label>
        </div>
        <div class="ftree">
          <div v-for="(f, k) in floors" :key="k" class="frow" :class="{ parent: f.p, off: f.off, sel: f.sel }">
            <i v-if="f.p" class="corner"></i>
            <i class="cb" :class="f.st"></i>
            <span>{{ f.t }}</span>
          </div>
        </div>
        <div class="rfoot"><i class="cb"></i><span>其他区域图元亮显</span></div>
      </aside>
    </main>

    <footer class="status">
      <span v-for="s in stats" :key="s.t" class="stat" :style="{ width: s.w + 'px' }">{{ s.t }}</span>
      <span class="sb sb1"><svg width="20" height="20" viewBox="0 0 20 20"><path d="M4 3V17H18M4 11H9V17" fill="none" stroke="#333"/></svg></span>
      <span class="sb sb2"><svg width="26" height="24" viewBox="0 0 26 24"><rect x="4.500" y="4.500" width="11" height="17" fill="#fff" stroke="#4a90e2"/><rect x="2" y="1" width="5" height="7" fill="#f28c3c"/><path d="M21 12h5l-2.500 4z" fill="#555"/></svg></span>
      <span class="sb sb3"><svg width="20" height="22" viewBox="0 0 20 22"><path d="M2 2L18 20M18 2L2 20" stroke="#9a9a9a"/></svg></span>
      <span class="sb sb4"><svg width="40" height="22" viewBox="0 0 40 22"><path d="M8 4L5 18H22M5 18L16 12" fill="none" stroke="#333"/><path d="M30 12h6l-3 4z" fill="#555"/></svg></span>
      <span class="sb sb5"><svg width="40" height="22" viewBox="0 0 40 22"><path d="M7 4V12M3 8H11M12 8H22" stroke="#333"/><rect x="14" y="13" width="8" height="5" fill="#333"/><path d="M30 12h6l-3 4z" fill="#555"/></svg></span>
      <span class="sb sb6">跨图层选择</span>
      <span class="sb sb7">折线选择</span>
      <span class="hint">按鼠标左键指定第一个角点，或拾取构件图元</span>
      <span class="fps">58.8235 FPS</span>
    </footer>
    <div class="black"></div>
  </div>
</template>

<style>
html, body { margin: 0; background: #f0f0f0; overflow: hidden; }
</style>

<style scoped>
.app {
  width: 1920px; height: 1080px; display: flex; flex-direction: column; overflow: hidden;
  font-family: "Noto Sans", "Noto Sans CJK SC", sans-serif; font-size: 15px; color: #333; background: #f0f0f0;
  filter: blur(0.45px); position: relative;
}
i { font-style: normal; display: block; }
span, label { white-space: nowrap; }
.tri { width: 0; height: 0; border: 4px solid transparent; border-top: 5px solid #666; border-bottom: 0; }
.tri.small { border-width: 3.5px; border-top-width: 4px; border-bottom-width: 0; border-top-color: #888; }

.top { height: 52px; display: flex; background: #fff; flex: none; position: relative; box-shadow: inset 0 -2px 0 #e6e7e8; }
.logo-col { width: 57px; flex: none; position: relative; border-right: 1px solid #f0f0f0; }
.logo { margin: 10px 0 0 11px; width: 35px; height: 35px; border-radius: 7px; background: linear-gradient(160deg, #52c7f8, #0d72d8); }
.logo-mark { position: absolute; left: 47px; top: 46px; border: 3px solid transparent; border-right-color: #777; border-bottom-color: #777; }
.top-shadow { position: absolute; left: 1475px; top: 0; width: 342px; height: 2px; background: linear-gradient(#b8b8b8, #efefef); }
.top-main { flex: 1; display: flex; flex-direction: column; min-width: 0; }
.title-row { height: 26px; display: flex; align-items: center; padding-left: 5px; }
.qat { display: flex; align-items: center; width: 581px; flex: none; }
.qbtn { height: 24px; display: flex; align-items: center; justify-content: center; flex: none; }
.qbtn.on { background: #c6d6ee; }
.qmore { margin-left: 4px; font-size: 11px; color: #666; }
.win-title { font-size: 15px; letter-spacing: 0.3px; color: #333; white-space: nowrap; width: 640px; flex: none; }
.win-ctl { margin-left: auto; display: flex; gap: 33px; padding-right: 13px; }
.tab-row { height: 26px; display: flex; align-items: flex-end; }
.rtab { height: 23px; line-height: 23px; text-align: center; flex: none; color: #333; }
.rtab.on { background: #5aa8f2; color: #e8f3ff; border-radius: 3px 3px 0 0; }
.search-box { margin-left: 768.500px; width: 305px; height: 20px; box-sizing: border-box; border: 1px solid #c4c4c4; align-self: flex-start; margin-top: 3px; overflow: hidden; position: relative; flex: none; }
.search-txt { font-size: 13px; line-height: 17px; color: #aaa; padding-left: 3px; margin-top: -9px; white-space: nowrap; }
.s-ico { position: absolute; right: 8px; top: 2px; }
.avatar { margin: 2px 0 0 12px; align-self: flex-start; flex: none; }
.phone { align-self: flex-start; margin: 2px 0 0 4px; font-size: 15px; line-height: 22px; color: #222; width: 100px; flex: none; }
.user-icons { align-self: flex-start; margin: 3px 0 0 11px; display: flex; align-items: center; gap: 10px; flex: none; }
.help { font-size: 18px; line-height: 20px; color: #7f7f7f; display: flex; align-items: center; gap: 2px; }

.ribbon { height: 122px; flex: none; display: flex; background: linear-gradient(#fff 0%, #fff 40%, #ebedee 100%); border-bottom: 1px solid #8e9398; box-sizing: border-box; }
.rgroup { flex: none; display: flex; flex-direction: column; box-shadow: inset -1px 0 0 #dadcdd; margin-top: 2px; height: 118px; box-sizing: border-box; }
.rgroup:first-child .rname { padding-left: 6px; }
.ritems { display: flex; height: 92px; padding-top: 5px; box-sizing: border-box; }
.ritem { flex: none; height: 84px; display: flex; flex-direction: column; align-items: center; padding-top: 4px; box-sizing: border-box; }
.ritem span { line-height: 20px; margin-top: 5px; font-size: 15px; }
.ritem.on { background: #c6d6ee; }
.rname { text-align: center; line-height: 20px; color: #444; font-size: 15px; margin-top: 4px; }

.combos { height: 36px; flex: none; display: flex; background: #c9cdd1; padding: 5px 0 0 4px; box-sizing: border-box; gap: 7.300px; }
.combo { width: 124px; height: 25px; background: #fff; display: flex; align-items: center; justify-content: space-between; padding: 0 8px 0 4px; box-sizing: border-box; color: #333; }

.main { height: 831px; flex: none; display: flex; background: #f0f0f0; border-top: 1px solid #8e9499; box-sizing: border-box; }

.nav { width: 212px; margin-left: 1px; flex: none; display: flex; flex-direction: column; border-right: 1px solid #d5d5d5; box-sizing: border-box; }
.nav-title { height: 27px; line-height: 27px; color: #8a8a8a; padding-left: 10px; background: #ededed; border-bottom: 1px solid #d5d5d5; }
.nav-tools { height: 36px; display: flex; align-items: center; padding-right: 4px; gap: 5px; border-bottom: 1px solid #d5d5d5; background: #f0f0f0; }
.plus { margin: 0 auto 4px 7px; }
.tool-btn { width: 31px; height: 30px; border: 1px solid #9cc6f5; border-radius: 5px; background: #f5f9fe; display: flex; align-items: center; justify-content: center; box-sizing: border-box; }
.nav-list { flex: 1; background: #fff; padding-top: 2px; overflow: hidden; position: relative; }
.nav-row { height: 30px; display: flex; align-items: center; gap: 4px; padding-left: 6px; color: #333; }
.nav-row.child { margin-left: 51px; padding-left: 4px; width: 130px; box-sizing: border-box; gap: 8px; }
.nav-row.child.on { background: #c6d6ee; height: 26px; margin: 2px 0 2px 51px; }
.thumb { position: absolute; background: #c8c8c8; border-radius: 5px; }
.nav-thumb { left: 198px; top: 16px; width: 10px; height: 710px; }

.mid { width: 394px; margin-left: 5px; flex: none; display: flex; flex-direction: column; }
.strip { height: 15px; background: #d3d5d8; position: relative; flex: none; }
.strip.thin { height: 14px; }
.x { position: absolute; right: 5px; top: -3px; color: #8f8f8f; font-size: 16px; line-height: 18px; }
.ptabs { height: 28px; display: flex; flex: none; background: #efefef; border-bottom: 1px solid #d5d5d5; box-sizing: border-box; }
.ptab { width: 81px; text-align: center; line-height: 27px; font-size: 15px; border-right: 1px solid #d5d5d5; box-sizing: border-box; }
.ptab.off { background: #e3e3e3; color: #999; }
.ptab.cur { font-weight: 700; background: #f2f2f2; color: #333; }
.mtool { height: 37px; display: flex; align-items: center; background: #f0f0f0; border-bottom: 1px solid #d5d5d5; color: #555; flex: none; box-sizing: border-box; position: relative; padding-bottom: 2px; }
.mt { display: flex; align-items: center; gap: 5px; flex: none; }
.m1 { margin-left: 6px; width: 85px; }
.m1 .tri { margin-left: 6px; }
.m2 { width: 71px; }
.m3 { width: 73px; }
.more { color: #777; font-size: 11px; letter-spacing: -1px; margin-left: auto; padding-right: 3px; }
.msearch { height: 24px; background: #fff; display: flex; align-items: center; justify-content: space-between; padding: 0 8px 0 4px; color: #999; border-bottom: 1px solid #d5d5d5; flex: none; box-sizing: content-box; }
.mtree { height: 91px; background: #fff; overflow: hidden; position: relative; flex: none; }
.tr { height: 26px; line-height: 26px; display: flex; align-items: center; color: #333; margin-top: -1px; margin-bottom: 1px; }
.tr b { font-weight: 400; padding: 0 4px; line-height: 27px; }
.tr b.sel { background: #c6d6ee; }
.l1 { padding-left: 14px; gap: 8px; }
.l2 { padding-left: 39px; gap: 8px; }
.l3 { padding-left: 76px; }
.corner { width: 0; height: 0; border-left: 7px solid transparent; border-bottom: 7px solid #444; }
.tree-thumb { left: 382px; top: 12px; width: 9px; height: 44px; }
.msplit { height: 6px; background: #f6f6f6; flex: none; }
.ptable { flex: none; height: 550px; position: relative; background: #fff; }
.phead { display: flex; height: 26px; line-height: 25px; }
.phead .pc0 { background: #f0f0f0; }
.phead .pc1 { background: #f0f0f0; color: #555; justify-content: center; padding: 0; }
.phead .pc2 { background: #7cb8f8; color: #fff; justify-content: center; padding: 0; }
.pc0 { width: 27px; flex: none; box-sizing: border-box; background: #f0f0f0; text-align: center; color: #444; border-right: 1px solid #d8d8d8; border-bottom: 1px solid #d8d8d8; }
.pc1 { width: 126px; flex: none; box-sizing: border-box; padding-left: 5px; border-right: 1px solid #d8d8d8; border-bottom: 1px solid #d8d8d8; color: #333; display: flex; align-items: center; white-space: nowrap; position: relative; }
.pc2 { width: 219px; flex: none; box-sizing: border-box; padding-left: 5px; border-right: 1px solid #d8d8d8; border-bottom: 1px solid #d8d8d8; display: flex; align-items: center; white-space: nowrap; color: #333; }
.prow { display: flex; height: 26.200px; line-height: 25px; }
.pc0.cur { background: #7cb8f8; color: #fff; font-weight: 700; }
.pc1.link { color: #3f6fe6; }
.pc2.off { background: #ececec; color: #a6a6a6; }
.pc2.editing { border: 2px solid #777; padding-left: 3px; }
.pc1.sub { padding-left: 40px; }
.minus { width: 14px; height: 14px; border: 1px solid #999; border-radius: 2px; line-height: 11px; text-align: center; margin-right: 8px; box-sizing: border-box; flex: none; }
.guide { position: absolute; left: 11px; top: -1px; bottom: 0; width: 20px; border-left: 1px solid #ccc; }
.guide::after { content: ""; position: absolute; left: 0; right: 0; top: 13px; border-top: 1px solid #ccc; }
.gr-top { margin-right: 1px; margin-top: -6px; }
.pscroll { position: absolute; left: 373px; top: 0; width: 20px; bottom: 0; }
.arrow { position: absolute; left: 5px; width: 0; height: 0; border: 5px solid transparent; }
.arrow.up { top: 1px; border-bottom: 6px solid #222; border-top: 0; }
.arrow.down { bottom: 4px; border-top: 6px solid #222; border-bottom: 0; }
.prop-thumb { left: 5px; top: 105px; width: 10px; height: 198px; }
.pfoot { flex: 1; background: #efefef; padding: 6px 0 0 8px; }
.sec-btn { width: 98px; height: 28px; border: 1px solid #d4d4d4; border-radius: 3px; background: #f4f4f4; font: inherit; color: #444; display: block; }

.center { width: 962px; margin-left: 6px; flex: none; display: flex; flex-direction: column; }
.canvas { height: 456px; flex: none; background: #000; position: relative; overflow: hidden; }
.scene { display: block; }
.ax { font-family: "Liberation Sans", sans-serif; font-size: 22px; }
.lbl { font-family: "Liberation Sans", sans-serif; font-size: 20px; fill: #fff; }
.view-bar { position: absolute; left: 914px; top: 3px; width: 41px; height: 284px; background: #9a9ea2; }
.view-bar svg { display: block; }
.vt { font-family: "Liberation Sans", sans-serif; font-size: 9px; fill: #222; text-anchor: middle; }
.csplit { height: 6px; background: #fff; flex: none; position: relative; }
.csplit i { position: absolute; left: 419px; top: 0; width: 124px; height: 6px; background: #6d757c; }
.edit { flex: 1; display: flex; flex-direction: column; width: 959px; position: relative; }
.edit-title { height: 27px; line-height: 27px; background: #efefef; color: #777; padding-left: 10px; border-bottom: 1px solid #d0d0d0; box-sizing: border-box; flex: none; }
.etool { height: 48px; display: flex; align-items: center; margin-left: 12px; border-left: 1px solid #cfcfcf; padding: 11px 0 0 2px; box-sizing: border-box; color: #555; flex: none; width: 936px; }
.et { display: flex; align-items: center; justify-content: flex-start; gap: 6px; flex: none; }
.et .tri { margin-left: 8px; }
.rtable { margin-left: 12px; width: 936px; height: 268px; flex: none; border: 1px solid #aab0b5; border-bottom-color: #b9bec2; box-sizing: border-box; background: #fff; position: relative; }
.rhead, .rrow { display: grid; grid-template-columns: 17px 91px 70px 45px 41px 270px 208px 76px 47px 49px 21px; }
.rhead { height: 26px; background: #f0f0f0; }
.rhead span { text-align: center; line-height: 26px; color: #555; box-shadow: inset -1px -1px 0 #dcdcdc; overflow: hidden; }
.rhead .hi { background: #7cb8f8; color: #fff; }
.rhead .blank { background: #fff; box-shadow: none; }
.rbody { height: 222px; overflow: hidden; position: relative; }
.rrow { height: 57.500px; }
.rrow > span { background: #caffd4; box-shadow: inset -1px -1px 0 #c4c4c4; display: flex; align-items: center; padding-left: 3px; color: #222; overflow: hidden; padding-bottom: 2px; box-sizing: border-box; }
.rrow > .ridx { background: #f0f0f0; padding: 0; justify-content: center; color: #555; font-size: 16px; padding-bottom: 0; }
.rrow > .ridx.cur { background: #7cb8f8; color: #fff; font-weight: 700; }
.rrow > .rname-c { padding-left: 4px; color: #111; font-size: 15px; }
.rrow > .fig { padding: 0; align-items: flex-start; }
.fig svg { display: block; }
.figl { font-family: "Liberation Sans", sans-serif; font-size: 15px; fill: #111; }
.figl.n4 { font-size: 13px; }
.figr { fill: #f01f1f; }
.grade { margin-left: 4px; }
.mono { font-family: "Liberation Mono", monospace; font-size: 12.500px; letter-spacing: 0; }
.dots { font-family: "Liberation Sans", sans-serif; font-style: normal; font-size: 9px; letter-spacing: 0; }
.rrow > .desc { padding-left: 4px; }
.rrow > .rblank { background: #fff; box-shadow: none; }
.rrow > .num { font-family: "Liberation Sans", sans-serif; font-size: 13.500px; }
.r-thumb { left: 923px; top: 14px; width: 9px; height: 69px; }
.hscroll { height: 18px; position: relative; background: #fff; }
.hscroll::after { content: ""; position: absolute; left: 918px; width: 17px; top: 0; bottom: 0; background: #f0f0f0; }
.hscroll i { position: absolute; left: 13px; top: 4px; width: 537px; height: 11px; background: #c8c8c8; border-radius: 5px; }

.right { width: 336px; margin-left: 4px; flex: none; display: flex; flex-direction: column; border-left: 1px solid #d0d0d0; box-sizing: border-box; }
.right .x { right: 4px; }
.right-title { height: 27px; line-height: 27px; color: #888; padding-left: 10px; background: #efefef; border-bottom: 1px solid #d5d5d5; box-sizing: border-box; flex: none; }
.rtabs { height: 37px; display: flex; align-items: flex-end; padding-left: 3px; border-bottom: 1px solid #d5d5d5; box-sizing: border-box; flex: none; }
.rt { width: 78px; height: 27px; line-height: 27px; text-align: center; background: #e4e4e4; color: #777; border-radius: 4px 4px 0 0; }
.rt.cur { height: 31px; line-height: 31px; width: 76px; background: #fff; color: #4a90e2; border: 1px solid #dcdcdc; border-bottom: 0; box-sizing: border-box; }
.radios { height: 38px; display: flex; align-items: center; padding-left: 8px; gap: 23px; border-bottom: 2px solid #dcdcdc; box-sizing: border-box; flex: none; }
.radios label { display: flex; align-items: center; gap: 9px; color: #333; }
.radio { width: 17px; height: 17px; border-radius: 50%; border: 1px solid #888; background: #fff; box-sizing: border-box; position: relative; }
.radio.on::after { content: ""; position: absolute; inset: 3.500px; border-radius: 50%; background: #4a9df5; }
.ftree { flex: 1; background: #fff; padding-top: 4px; overflow: hidden; }
.frow { height: 30px; display: flex; align-items: center; padding-left: 58px; gap: 13px; color: #333; }
.frow.parent { padding-left: 10px; gap: 12px; }
.frow.parent .corner { margin-right: 4px; }
.frow.off { color: #a8a8a8; }
.frow.sel { background: linear-gradient(90deg, transparent 49px, #c6d6ee 49px); height: 26px; margin: 2px 0; }
.cb { width: 17px; height: 17px; border: 1px solid #aaa; border-radius: 3px; background: #fff; box-sizing: border-box; position: relative; flex: none; }
.frow.off .cb { background: #f0f0f0; border-color: #c8c8c8; }
.cb.part::after { content: ""; position: absolute; inset: 2px; background: #8ec5ff; border-radius: 2px; }
.frow.parent .cb.part { border-color: #9cb9d8; }
.cb.on { background: #62aef5; border-color: #62aef5; }
.cb.on::after, .frow.off .cb.grey::after { content: ""; position: absolute; left: 5px; top: 2px; width: 4px; height: 8px; border: solid #fff; border-width: 0 2px 2px 0; transform: rotate(42deg); }
.frow.off .cb.grey::after { border-color: #a8a8a8; }
.rfoot { height: 50px; display: flex; align-items: center; padding-left: 1px; gap: 9px; border-top: 1px solid #d5d5d5; box-sizing: border-box; flex: none; color: #333; }

.status { height: 37px; flex: none; display: flex; align-items: center; background: #dcdde0; padding-left: 3px; color: #333; }
.stat { flex: none; font-size: 14.500px; margin-top: 1px; }
.sb { height: 31px; margin-top: 3px; background: #cfcfcf; display: flex; align-items: center; justify-content: center; flex: none; box-sizing: border-box; font-size: 14.500px; color: #444; }
.sb1 { width: 29px; }
.sb2 { width: 45px; margin-left: 5px; background: #fff; border: 2px solid #7ab5f5; }
.sb3 { width: 32px; margin-left: 7px; }
.sb4 { width: 45px; margin-left: 3px; }
.sb5 { width: 45px; margin-left: 4px; }
.sb6 { width: 90px; margin-left: 4px; }
.sb7 { width: 76px; margin-left: 5px; }
.hint { margin-left: 8px; font-size: 15px; margin-top: 1px; }
.fps { margin-left: auto; padding-right: 14px; font-size: 14.500px; margin-top: 1px; }
.black { height: 2px; flex: none; background: #1a1a1a; }
</style>
